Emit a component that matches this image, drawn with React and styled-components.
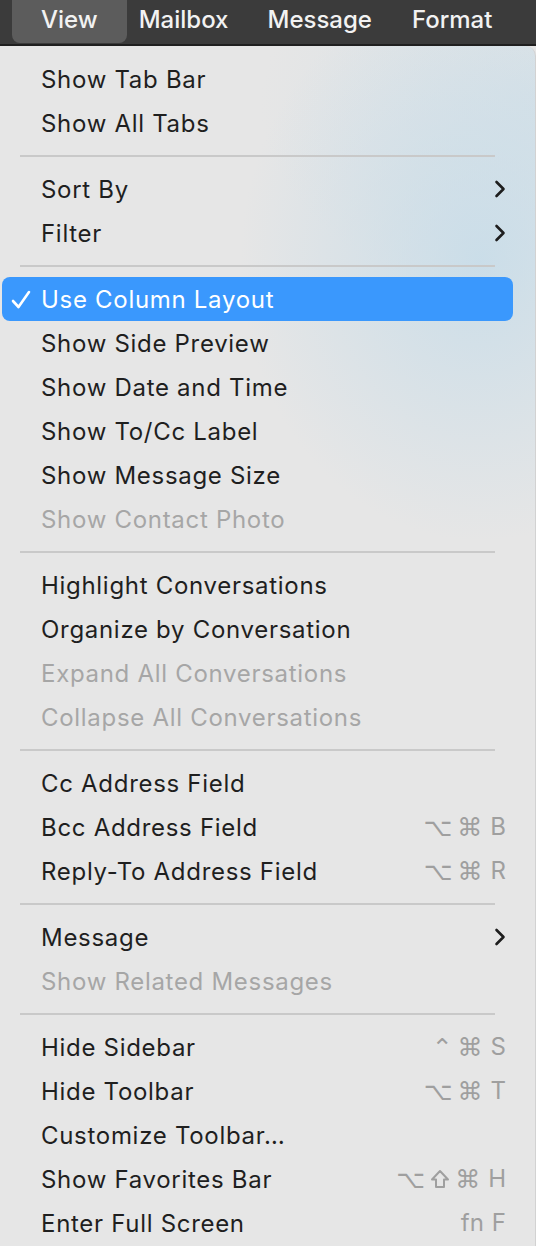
import React from 'react';
import styled, { createGlobalStyle } from 'styled-components';

const GlobalStyle = createGlobalStyle`
  html, body {
    margin: 0;
    padding: 0;
    background: #e6e6e6;
  }
  body {
    font-family: Inter, "Noto Sans", "DejaVu Sans", sans-serif;
    -webkit-font-smoothing: antialiased;
  }
`;

const Screen = styled.div`
  width: 536px;
  height: 1246px;
  overflow: hidden;
  display: flex;
  flex-direction: column;
  background: #e6e6e6;
`;

const MenuBar = styled.div`
  height: 44px;
  flex: none;
  display: flex;
  align-items: stretch;
  padding-left: 12px;
  background: #3b3b3b;
  border-bottom: 2px solid #1f1f1f;
`;

const BarItem = styled.div`
  display: flex;
  align-items: center;
  justify-content: center;
  height: 43px;
  padding: 0 ${(p) => p.$pad}px 4px;
  box-sizing: border-box;
  color: #f2f2f2;
  font-size: 24px;
  font-weight: 500;
  border-radius: 0 0 8px 8px;
  background: ${(p) => (p.$active ? '#5c5c5c' : 'transparent')};
`;

const Menu = styled.div`
  flex: 1;
  padding-top: 11px;
  border-top-right-radius: 10px;
  border-right: 1px solid #d2d2d2;
  background:
    radial-gradient(ellipse 240px 280px at 480px 215px, rgba(198, 220, 233, 0.85), rgba(210, 226, 234, 0) 100%),
    radial-gradient(ellipse 300px 200px at 560px 60px, rgba(205, 222, 232, 0.6), rgba(205, 222, 232, 0) 100%),
    #e6e6e6;
`;

const Row = styled.div`
  height: 44px;
  margin: 0 22px 0 2px;
  display: flex;
  align-items: center;
  position: relative;
  padding: 0 7px 0 39px;
  border-radius: 8px;
  background: ${(p) => (p.$selected ? '#3a98fd' : 'transparent')};
  color: ${(p) => (p.$selected ? '#ffffff' : p.$disabled ? '#a6a6a6' : '#1f1f1f')};
  font-size: 24px;
  letter-spacing: 0.7px;
`;

const Label = styled.span`
  flex: 1;
  white-space: nowrap;
`;

const Check = styled.svg`
  position: absolute;
  left: 9px;
  top: 13px;
  width: 20px;
  height: 20px;
`;

const Shortcut = styled.span`
  display: flex;
  align-items: center;
  gap: 5px;
  color: #9f9f9f;
  letter-spacing: 0;
`;

const Key = styled.span`
  font-family: ${(p) => (p.$glyph ? '"DejaVu Sans", sans-serif' : 'Inter, sans-serif')};
  font-size: ${(p) => (p.$glyph ? 25 : 24)}px;
  line-height: 1;
  margin-left: ${(p) => (p.$glyph ? 0 : 3)}px;
`;

const ShiftIcon = styled.svg`
  width: 20px;
  height: 20px;
`;

const Chevron = styled.svg`
  width: 12px;
  height: 20px;
`;

const Separator = styled.div`
  height: 22px;
  display: flex;
  align-items: center;
  padding: 0 40px 0 20px;
  &::after {
    content: '';
    flex: 1;
    height: 2px;
    background: #c9c9c9;
  }
`;

const sections = [
  [{ label: 'Show Tab Bar' }, { label: 'Show All Tabs' }],
  [
    { label: 'Sort By', sub: true },
    { label: 'Filter', sub: true },
  ],
  [
    { label: 'Use Column Layout', selected: true, checked: true },
    { label: 'Show Side Preview' },
    { label: 'Show Date and Time' },
    { label: 'Show To/Cc Label' },
    { label: 'Show Message Size' },
    { label: 'Show Contact Photo', disabled: true },
  ],
  [
    { label: 'Highlight Conversations' },
    { label: 'Organize by Conversation' },
    { label: 'Expand All Conversations', disabled: true },
    { label: 'Collapse All Conversations', disabled: true },
  ],
  [
    { label: 'Cc Address Field' },
    { label: 'Bcc Address Field', keys: ['⌥', '⌘', 'B'] },
    { label: 'Reply-To Address Field', keys: ['⌥', '⌘', 'R'] },
  ],
  [
    { label: 'Message', sub: true },
    { label: 'Show Related Messages', disabled: true },
  ],
  [
    { label: 'Hide Sidebar', keys: ['⌃', '⌘', 'S'] },
    { label: 'Hide Toolbar', keys: ['⌥', '⌘', 'T'] },
    { label: 'Customize Toolbar…' },
    { label: 'Show Favorites Bar', keys: ['⌥', 'shift', '⌘', 'H'] },
    { label: 'Enter Full Screen', keys: ['fn', 'F'] },
  ],
];

const glyphs = ['⌥', '⌘', '⌃'];

function ShortcutKey({ k }) {
  if (k === 'shift') {
    return (
      <ShiftIcon viewBox="0 0 20 20">
        <path d="M10 2 L18 10.5 H14 V18 H6 V10.5 H2 Z" fill="none" stroke="#9f9f9f" strokeWidth="2" strokeLinejoin="round" />
      </ShiftIcon>
    );
  }
  return <Key $glyph={glyphs.includes(k)}>{k}</Key>;
}

function MenuRow({ item }) {
  return (
    <Row $selected={item.selected} $disabled={item.disabled}>
      {item.checked && (
        <Check viewBox="0 0 20 20">
          <path d="M2 11 L7.5 17 L18 2" fill="none" stroke="#fff" strokeWidth="2.6" strokeLinecap="round" strokeLinejoin="round" />
        </Check>
      )}
      <Label>{item.label}</Label>
      {item.sub && (
        <Chevron viewBox="0 0 12 20">
          <path d="M2.5 3 L9.5 10 L2.5 17" fill="none" stroke="#1e1e1e" strokeWidth="2.6" strokeLinecap="round" strokeLinejoin="round" />
        </Chevron>
      )}
      {item.keys && (
        <Shortcut>
          {item.keys.map((k) => (
            <ShortcutKey key={k} k={k} />
          ))}
        </Shortcut>
      )}
    </Row>
  );
}

export default function App() {
  return (
    <>
      <GlobalStyle />
      <Screen>
        <MenuBar>
          <BarItem $active $pad={29}>View</BarItem>
          <BarItem $pad={12}>Mailbox</BarItem>
          <BarItem $pad={27}>Message</BarItem>
          <BarItem $pad={13}>Format</BarItem>
        </MenuBar>
        <Menu>
          {sections.map((section, i) => (
            <React.Fragment key={i}>
              {i > 0 && <Separator />}
              {section.map((item) => (
                <MenuRow key={item.label} item={item} />
              ))}
            </React.Fragment>
          ))}
        </Menu>
      </Screen>
    </>
  );
}
